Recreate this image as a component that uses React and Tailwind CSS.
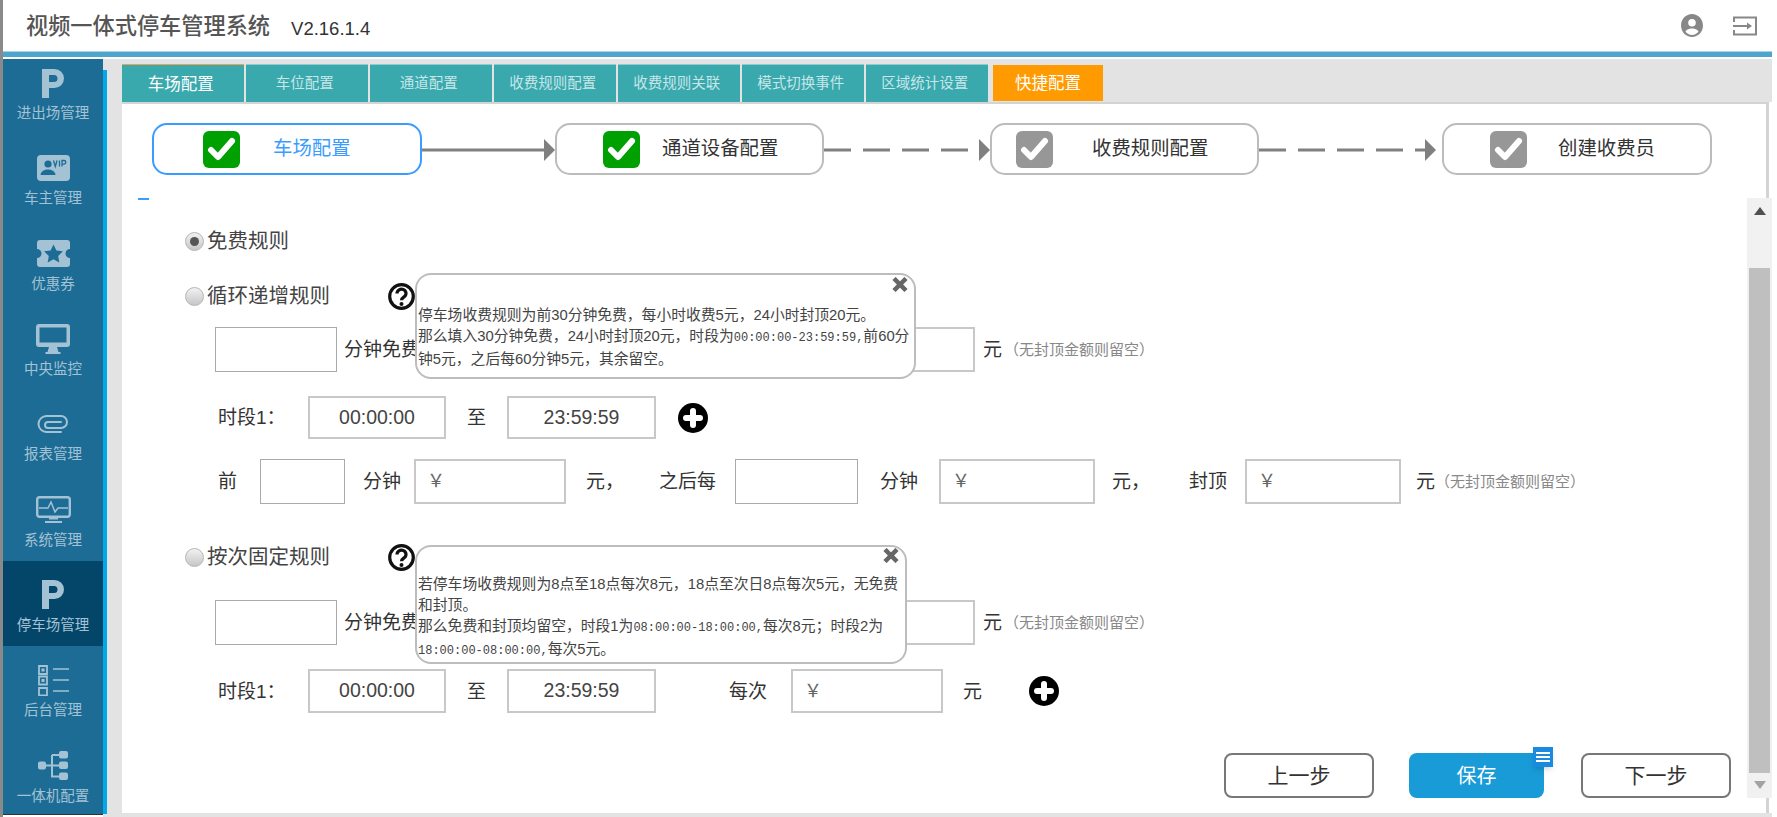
import React from "react";

const MENU = [
  { label: "进出场管理", icon: "parking", cls: "h-[75px]" },
  { label: "车主管理", icon: "vip", cls: "h-[85.33px]" },
  { label: "优惠券", icon: "coupon", cls: "h-[85.33px]" },
  { label: "中央监控", icon: "monitor", cls: "h-[85.33px]" },
  { label: "报表管理", icon: "clip", cls: "h-[85.33px]" },
  { label: "系统管理", icon: "pulse", cls: "h-[85.33px]" },
  { label: "停车场管理", icon: "parking", cls: "h-[85.33px] bg-[#04466a]" },
  { label: "后台管理", icon: "list", cls: "h-[85.33px]" },
  { label: "一体机配置", icon: "nodes", cls: "h-[85.33px]" },
];

const TABS = ["车场配置", "车位配置", "通道配置", "收费规则配置", "收费规则关联", "模式切换事件", "区域统计设置"];

const NOTE = "（无封顶金额则留空）";

const MenuIcon = ({ name }) => {
  const c = "#a3c2d4";
  const bg = "#1d6c95";
  if (name === "parking")
    return (
      <svg width="22" height="29" viewBox="0 0 22 29">
        <path fill={c} fillRule="evenodd" d="M0 0h12.5a9.5 9.5 0 0 1 0 19H7v10H0z M7 6v7h5a3.5 3.5 0 0 0 0-7z" />
      </svg>
    );
  if (name === "vip")
    return (
      <svg width="33" height="26" viewBox="0 0 33 26">
        <rect width="33" height="26" rx="4" fill={c} />
        <circle cx="11" cy="9" r="3.6" fill={bg} />
        <path fill={bg} d="M3.5 20c.5-4 4-5.5 7.500-5.500s7 1.500 7.500 5.500z" />
        <path fill="none" stroke={bg} strokeWidth="1.300" d="M16.500 5.500l1.800 6 1.800-6M22.500 5.500v6M25 11.500v-6h2a1.700 1.700 0 0 1 0 3.600h-2" />
      </svg>
    );
  if (name === "coupon")
    return (
      <svg width="33" height="27" viewBox="0 0 33 27">
        <path fill={c} d="M3 0h27a3 3 0 0 1 3 3v6a4.500 4.500 0 0 0 0 9v6a3 3 0 0 1-3 3H3a3 3 0 0 1-3-3v-6a4.500 4.500 0 0 0 0-9V3a3 3 0 0 1 3-3z" />
        <path fill={bg} d="M16.500 4.500l2.900 5.900 6.500.9-4.700 4.600 1.100 6.500-5.800-3.100-5.800 3.100 1.100-6.500-4.700-4.600 6.500-.9z" />
      </svg>
    );
  if (name === "monitor")
    return (
      <svg width="34" height="30" viewBox="0 0 34 30">
        <path fill={c} fillRule="evenodd" d="M3 0h28a3 3 0 0 1 3 3v17a3 3 0 0 1-3 3H3a3 3 0 0 1-3-3V3a3 3 0 0 1 3-3z M3.500 3.500v15h27v-15z" />
        <path fill={c} d="M13 23h8l1.500 5h2v2h-15v-2h2z" />
      </svg>
    );
  if (name === "clip")
    return (
      <svg width="32" height="20" viewBox="0 0 32 20">
        <path fill="none" stroke={c} strokeWidth="2" strokeLinecap="round" d="M24 18H9.500a8 8 0 0 1 0-16H24a6 6 0 0 1 0 12H11a3 3 0 0 1 0-6h13" />
      </svg>
    );
  if (name === "pulse")
    return (
      <svg width="35" height="27" viewBox="0 0 35 27">
        <rect x="1.200" y="1.200" width="32.600" height="19.600" rx="2.500" fill="none" stroke={c} strokeWidth="2.400" />
        <path fill="none" stroke={c} strokeWidth="1.500" d="M3 12h9l3-6 4 10 3-4h10" />
        <path fill={c} d="M13 21h9v2.500h-9zM9 25h17v2H9z" />
      </svg>
    );
  if (name === "list")
    return (
      <svg width="31" height="31" viewBox="0 0 31 31">
        <path fill="none" stroke={c} strokeWidth="1.800" d="M1 1h8v8H1zM1 11.500h8v8H1zM1 23h8v7.500H1z" />
        <path fill={c} d="M3.500 3.500h3v3h-3zM3.500 14h3v3h-3z" />
        <path stroke={c} strokeWidth="1.600" d="M15 4h16M15 15h16M15 26h16" />
      </svg>
    );
  return (
    <svg width="30" height="29" viewBox="0 0 30 29">
      <path fill="none" stroke={c} strokeWidth="2" d="M6 14.500h17M14 4v21.500h9M14 4h9" />
      <rect y="10.500" width="8" height="8" rx="2" fill={c} />
      <rect x="21" y="0" width="9" height="7.500" rx="2" fill={c} />
      <rect x="21" y="10.500" width="9" height="7.500" rx="2" fill={c} />
      <rect x="21" y="21.500" width="9" height="7.500" rx="2" fill={c} />
    </svg>
  );
};

const CheckIcon = ({ className }) => (
  <div className={`w-[37px] h-[37px] rounded-[6px] flex items-center justify-center shrink-0 ${className}`}>
    <svg width="29" height="25" viewBox="0 0 29 25">
      <path fill="none" stroke="#fff" strokeWidth="6" strokeLinecap="round" strokeLinejoin="round" d="M4 13l7 7L25 4" />
    </svg>
  </div>
);

const Step = ({ active, ok, label, wCls, iconCls, textCls }) => (
  <div
    className={`h-[52px] rounded-[15px] border-2 flex items-center shrink-0 ${wCls} ${
      active ? "border-[#3b9cff] text-[#3b9cff]" : "border-[#bcbcbc] text-[#333]"
    }`}
  >
    <div className={iconCls}>
      <CheckIcon className={ok ? "bg-[#00a000]" : "bg-[#979797]"} />
    </div>
    <span className={`text-[19.400px] whitespace-nowrap ${textCls}`}>{label}</span>
  </div>
);

const Connector = ({ width, dashed, end }) => (
  <svg width={width} height="24" viewBox={`0 0 ${width} 24`} className="shrink-0">
    <path
      stroke="#808080"
      strokeWidth="3"
      strokeDasharray={dashed ? "27 12" : undefined}
      d={`M0 13H${end - 9}`}
    />
    <path fill="#808080" d={`M${end - 11} 2l11 11-11 11z`} />
  </svg>
);

const Radio = ({ checked }) => (
  <span className="w-[19px] h-[19px] rounded-full border border-[#b5b5b5] bg-linear-to-b from-[#f2f2f2] to-[#c6c6c6] flex items-center justify-center shrink-0">
    {checked && <span className="w-[9px] h-[9px] rounded-full bg-[#555]" />}
  </span>
);

const Help = () => (
  <svg width="27" height="27" viewBox="0 0 27 27" className="shrink-0">
    <circle cx="13.500" cy="13.500" r="11.800" fill="#fff" stroke="#111" strokeWidth="3.200" />
    <path fill="none" stroke="#111" strokeWidth="3.200" d="M9 10.500a4.500 4.200 0 1 1 7 3.400c-1.700 1.200-2.500 1.800-2.500 3.400" />
    <circle cx="13.500" cy="21" r="2" fill="#111" />
  </svg>
);

const Plus = () => (
  <svg width="30" height="30" viewBox="0 0 30 30" className="shrink-0">
    <circle cx="15" cy="15" r="15" fill="#000" />
    <path stroke="#fff" strokeWidth="6" strokeLinecap="round" d="M15 8v14M8 15h14" />
  </svg>
);

const Close = () => (
  <svg width="16" height="15" viewBox="0 0 16 15">
    <path stroke="#666" strokeWidth="4.500" d="M2 1.500l12 12M14 1.500l-12 12" />
  </svg>
);

// thin box = empty number input, thick box = time / money input
const Box = ({ className, thick, children }) => (
  <div
    className={`h-full flex items-center shrink-0 text-[#444] ${thick ? "border-2 border-[#c8c8c8]" : "border border-[#aaa]"} ${className}`}
  >
    {children}
  </div>
);

const Label = ({ className, children }) => (
  <span className={`text-[19px] pt-[2px] text-[#333] whitespace-nowrap shrink-0 ${className}`}>{children}</span>
);

const Note = ({ className = "" }) => (
  <span className={`text-[15px] pt-[2px] text-[#888] whitespace-nowrap ${className}`}>{NOTE}</span>
);

const Yuan = ({ className }) => (
  <Box thick className={`pl-[11px] text-[18px] text-[#666] ${className}`}>￥</Box>
);

const Time = ({ className, children }) => (
  <Box thick className={`justify-center text-[19.500px] ${className}`}>{children}</Box>
);

const Mono = ({ children }) => <span className="font-['Liberation_Mono'] text-[12px]">{children}</span>;

const RuleTitle = ({ className, label, tipCls, closeCls, children }) => (
  <div className={`relative flex items-center h-[30px] ml-[63px] ${className}`}>
    <Radio />
    <span className="ml-[3px] pt-[1px] text-[20.500px] text-[#444] whitespace-nowrap w-[181px]">{label}</span>
    <Help />
    <div className={`absolute z-10 left-[230px] bg-white border-2 border-[#bdbdbd] rounded-[16px] pl-[1px] ${tipCls}`}>
      <div className={`absolute ${closeCls}`}>
        <Close />
      </div>
      <div className="text-[14.800px] leading-[21px] text-[#444] whitespace-nowrap">{children}</div>
    </div>
  </div>
);

const FreeRow = ({ className }) => (
  <div className={`flex items-center h-[45px] pl-[93px] ${className}`}>
    <Box className="w-[122px]" />
    <Label className="ml-[7px] w-[536px]">分钟免费</Label>
    <Box thick className="w-[95px]" />
    <Label className="ml-[8px] w-[21px]">元</Label>
    <Note />
  </div>
);

const App = () => {
  return (
    <div className="flex w-[1777px] h-[817px] overflow-hidden bg-white font-['Liberation_Sans','Noto_Sans_CJK_SC',sans-serif]">
      <div className="w-[3px] h-full bg-[#8a8a8a] shrink-0" />
      <div className="w-[1769px] shrink-0 flex flex-col">
        {/* Header */}
        <header className="h-[51px] shrink-0 flex items-center pl-[23px]">
          <span className="mt-[3px] text-[22.200px] text-[#555] font-medium whitespace-nowrap">视频一体式停车管理系统</span>
          <span className="ml-[21px] mt-[7px] text-[18.500px] text-[#333]">V2.16.1.4</span>
          <div className="ml-auto flex items-center mr-[15px]">
            <svg width="22" height="23" viewBox="0 0 22 23">
              <path fill="#888" fillRule="evenodd" d="M11 0c6 0 11 5 11 11.500S17 23 11 23 0 18 0 11.500 5 0 11 0zm0 5a3.800 3.800 0 1 0 0 7.600A3.800 3.800 0 0 0 11 5zm0 9.500c-3 0-6 1.300-6.500 3.300 1.500 1.900 3.900 3.200 6.500 3.200s5-1.300 6.500-3.200c-.5-2-3.500-3.300-6.500-3.300z" />
            </svg>
            <svg width="24" height="20" viewBox="0 0 24 20" className="ml-[30px]">
              <path fill="none" stroke="#888" strokeWidth="2" d="M1 6V1.500h22v17H1V14M0 10h15" />
              <path fill="#888" d="M14 6.500l5 3.500-5 3.500z" />
            </svg>
          </div>
        </header>
        <div className="h-[6px] shrink-0 bg-[#4fa6cc] border-t border-[#a9d2e4]" />
        <div className="h-[2px] shrink-0" />

        <div className="flex-1 flex min-h-0">
          {/* Sidebar */}
          <div className="w-[100px] shrink-0 flex flex-col">
            <nav className="h-[755px] bg-[#1d6c95] overflow-hidden flex flex-col">
              {MENU.map((item) => (
                <div key={item.label} className={`shrink-0 flex flex-col items-center justify-end pb-[11px] ${item.cls}`}>
                  <div className="h-[32px] flex items-center justify-center mb-[4px]">
                    <MenuIcon name={item.icon} />
                  </div>
                  <span className="h-[20px] leading-[20px] text-[14.500px] text-[#a3c2d4] whitespace-nowrap">{item.label}</span>
                </div>
              ))}
            </nav>
            <div className="h-[1px] bg-[#333]" />
          </div>
          <div className="w-[4px] shrink-0 bg-[#e3e3e3] pt-[11px]">
            <div className="h-[744px] bg-[#00a9ea]" />
          </div>

          {/* Main */}
          <main className="flex-1 min-w-0 bg-[#e3e3e3] pt-[5px] pl-[15px] flex flex-col">
            <div className="h-[38px] flex shrink-0">
              {TABS.map((tab, i) => (
                <div
                  key={tab}
                  className={`w-[121.500px] mr-[2.500px] pr-[4px] flex items-center justify-center bg-[#39a9ae] border-t whitespace-nowrap ${
                    i === 0 ? "border-[#eea24a] pt-[2px] text-[16.500px] text-white" : "border-[#8ccdd0] text-[14.500px] text-[#c8e6e7]"
                  }`}
                >
                  {tab}
                </div>
              ))}
              <div className="ml-[3px] w-[110px] my-[1px] flex items-center justify-center bg-[#ff9a00] text-[16.500px] text-white">
                快捷配置
              </div>
            </div>

            <div className="flex">
              <section className="w-[1647px] h-[711px] bg-white border-t-2 border-r-[3px] border-[#d4d4d4] flex flex-col">
                {/* Steps */}
                <div className="flex items-center shrink-0 ml-[30px] mt-[19px] mb-[23px]">
                  <Step active ok label="车场配置" wCls="w-[270px]" iconCls="ml-[49px]" textCls="ml-[33px]" />
                  <Connector width={133} end={133} />
                  <Step ok label="通道设备配置" wCls="w-[269px]" iconCls="ml-[46px]" textCls="ml-[22px]" />
                  <Connector width={166} dashed end={166} />
                  <Step label="收费规则配置" wCls="w-[269px]" iconCls="ml-[24px]" textCls="ml-[39px]" />
                  <Connector width={183} dashed end={177} />
                  <Step label="创建收费员" wCls="w-[270px]" iconCls="ml-[46px]" textCls="ml-[31px]" />
                </div>

                <div className="flex h-[600px] shrink-0">
                  <div className="flex-1 min-w-0 flex flex-col">
                    <div className="h-[2px] w-[11px] ml-[16px] bg-[#3b9cff] shrink-0" />

                    <div className="flex items-center h-[22px] ml-[63px] mt-[30px] shrink-0">
                      <Radio checked />
                      <span className="ml-[3px] pt-[1px] text-[20.500px] text-[#444]">免费规则</span>
                    </div>

                    {/* 循环递增规则 */}
                    <RuleTitle
                      label="循环递增规则"
                      className="mt-[29px] shrink-0"
                      tipCls="top-[-8px] w-[501px] h-[106px] pt-[30px]"
                      closeCls="right-[6px] top-[2px]"
                    >
                      停车场收费规则为前30分钟免费，每小时收费5元，24小时封顶20元。
                      <br />
                      那么填入30分钟免费，24小时封顶20元，时段为<Mono>00:00:00-23:59:59,</Mono>前60分
                      <br />
                      钟5元，之后每60分钟5元，其余留空。
                    </RuleTitle>
                    <FreeRow className="mt-[16px] shrink-0" />

                    <div className="flex items-center h-[43px] pl-[96px] mt-[24px] shrink-0">
                      <Label className="w-[90px]">时段1：</Label>
                      <Time className="w-[138px]">00:00:00</Time>
                      <Label className="ml-[21px] w-[40px]">至</Label>
                      <Time className="w-[149px]">23:59:59</Time>
                      <div className="ml-[22px]">
                        <Plus />
                      </div>
                    </div>

                    <div className="flex items-center h-[45px] pl-[96px] mt-[20px] shrink-0">
                      <Label className="w-[42px]">前</Label>
                      <Box className="w-[85px]" />
                      <Label className="ml-[18px] w-[51px]">分钟</Label>
                      <Yuan className="w-[152px]" />
                      <Label className="ml-[20px] w-[73px]">元，</Label>
                      <Label className="w-[76px]">之后每</Label>
                      <Box className="w-[123px]" />
                      <Label className="ml-[22px] w-[59px]">分钟</Label>
                      <Yuan className="w-[156px]" />
                      <Label className="ml-[17px] w-[77px]">元，</Label>
                      <Label className="w-[56px]">封顶</Label>
                      <Yuan className="w-[156px]" />
                      <Label className="ml-[15px] w-[19px]">元</Label>
                      <Note />
                    </div>

                    {/* 按次固定规则 */}
                    <RuleTitle
                      label="按次固定规则"
                      className="mt-[38px] shrink-0"
                      tipCls="top-[3px] w-[492px] h-[119px] pt-[27px]"
                      closeCls="right-[6px] top-[1px]"
                    >
                      若停车场收费规则为8点至18点每次8元，18点至次日8点每次5元，无免费
                      <br />
                      和封顶。
                      <br />
                      那么免费和封顶均留空，时段1为<Mono>08:00:00-18:00:00,</Mono>每次8元；时段2为
                      <br />
                      <Mono>18:00:00-08:00:00,</Mono>每次5元。
                    </RuleTitle>
                    <FreeRow className="mt-[28px] shrink-0" />

                    <div className="flex items-center h-[44px] pl-[96px] mt-[24px] shrink-0">
                      <Label className="w-[90px]">时段1：</Label>
                      <Time className="w-[138px]">00:00:00</Time>
                      <Label className="ml-[21px] w-[40px]">至</Label>
                      <Time className="w-[149px]">23:59:59</Time>
                      <Label className="ml-[73px] w-[62px]">每次</Label>
                      <Yuan className="w-[152px]" />
                      <Label className="ml-[20px] w-[66px]">元</Label>
                      <Plus />
                    </div>

                    {/* Buttons */}
                    <div className="flex h-[45px] mt-[40px] pl-[1102px] shrink-0 text-[21px]">
                      <button className="w-[150px] h-full border-2 border-[#777] rounded-[8px] text-[#333]">上一步</button>
                      <div className="relative ml-[35px] w-[135px] h-full">
                        <button className="w-full h-full rounded-[8px] bg-[#189bd6] text-[20px] text-white">保存</button>
                        <div className="absolute right-[-9px] top-[-6px] w-[20px] h-[20px] bg-[#1a8ae0] shadow-md flex flex-col items-center justify-center gap-[2px]">
                          <span className="w-[14px] h-[2px] bg-white" />
                          <span className="w-[14px] h-[2px] bg-white" />
                          <span className="w-[14px] h-[2px] bg-white" />
                        </div>
                      </div>
                      <button className="ml-[37px] w-[150px] h-full border-2 border-[#777] rounded-[8px] text-[#333]">下一步</button>
                    </div>
                  </div>

                  {/* Scrollbar */}
                  <div className="w-[25px] shrink-0 -mr-[6px] bg-[#f1f1f1] flex flex-col items-center z-20">
                    <div className="h-[70px] w-full flex justify-center pt-[9px]">
                      <svg width="12" height="8" viewBox="0 0 12 8">
                        <path fill="#505050" d="M6 0l6 8H0z" />
                      </svg>
                    </div>
                    <div className="w-[21px] h-[505px] bg-[#bfbfbf]" />
                    <div className="pt-[8px]">
                      <svg width="12" height="8" viewBox="0 0 12 8">
                        <path fill="#a3a3a3" d="M0 0h12L6 8z" />
                      </svg>
                    </div>
                  </div>
                </div>
              </section>
              <div className="w-[3px] h-[711px] bg-white" />
            </div>
          </main>
        </div>
      </div>
    </div>
  );
};

export default App;
